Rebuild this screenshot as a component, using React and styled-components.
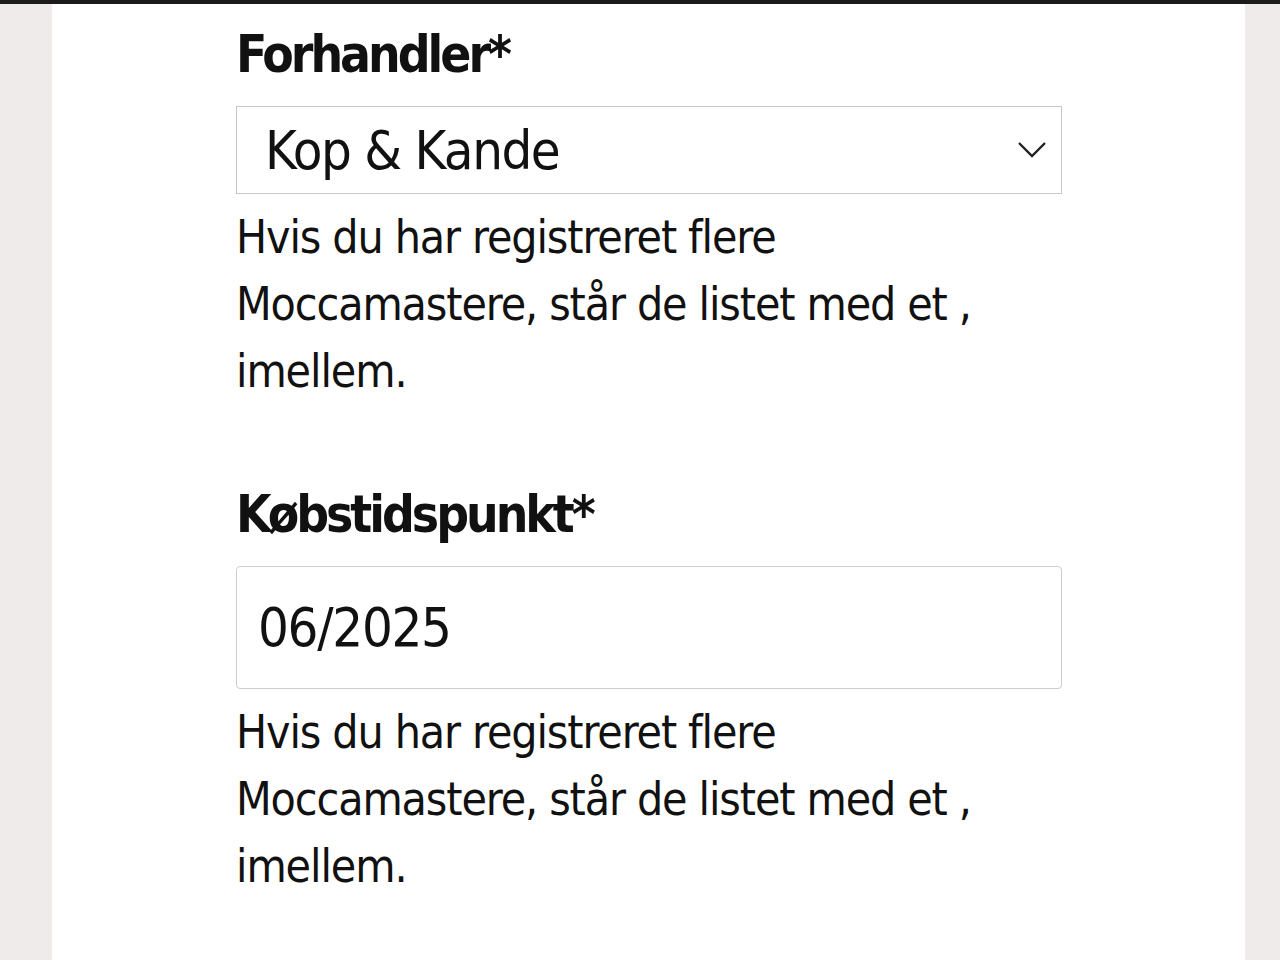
import React from 'react';
import styled, { createGlobalStyle } from 'styled-components';

const GlobalStyle = createGlobalStyle`
  html, body {
    margin: 0;
    padding: 0;
    background: #eeebea;
    font-family: "DejaVu Sans Condensed", "DejaVu Sans", sans-serif;
    font-stretch: condensed;
    color: #111;
  }
`;

const TopBar = styled.div`
  height: 4px;
  background: #1b1b1b;
`;

const Page = styled.div`
  display: flex;
  min-height: 956px;
`;

const Column = styled.main`
  margin-left: 52px;
  width: 1193px;
  background: #fff;
  padding: 19px 0 0 184px;
  box-sizing: border-box;
`;

const Field = styled.section`
  width: 826px;
  margin-bottom: 78px;
`;

const Label = styled.label`
  display: block;
  font-weight: bold;
  font-size: 51px;
  line-height: 64px;
  letter-spacing: -3px;
  margin-bottom: 19px;
`;

const SelectBox = styled.div`
  height: 88px;
  border: 1px solid #c6c6c6;
  box-sizing: border-box;
  display: flex;
  align-items: center;
  justify-content: space-between;
  padding: 0 14px 0 28px;
  font-size: 54px;
  letter-spacing: -1.5px;
`;

const InputBox = styled.div`
  height: 123px;
  border: 1px solid #cdcdcd;
  border-radius: 4px;
  box-sizing: border-box;
  display: flex;
  align-items: center;
  padding: 0 21px;
  font-size: 54px;
  letter-spacing: -1.3px;
`;

const Help = styled.p`
  margin: 10px 0 0;
  font-size: 46px;
  line-height: 67px;
  letter-spacing: -1.1px;
`;

const Chevron = () => (
  <svg width="30" height="18" viewBox="0 0 30 18" fill="none">
    <path d="M2 2 L15 15 L28 2" stroke="#222" strokeWidth="2.4" />
  </svg>
);

export default function App() {
  return (
    <>
      <GlobalStyle />
      <TopBar />
      <Page>
        <Column>
          <Field>
            <Label>Forhandler*</Label>
            <SelectBox>
              <span>Kop &amp; Kande</span>
              <Chevron />
            </SelectBox>
            <Help>
              Hvis du har registreret flere<br />
              Moccamastere, står de listet med et ,<br />
              imellem.
            </Help>
          </Field>
          <Field>
            <Label>Købstidspunkt*</Label>
            <InputBox>06/2025</InputBox>
            <Help>
              Hvis du har registreret flere<br />
              Moccamastere, står de listet med et ,<br />
              imellem.
            </Help>
          </Field>
        </Column>
      </Page>
    </>
  );
}
